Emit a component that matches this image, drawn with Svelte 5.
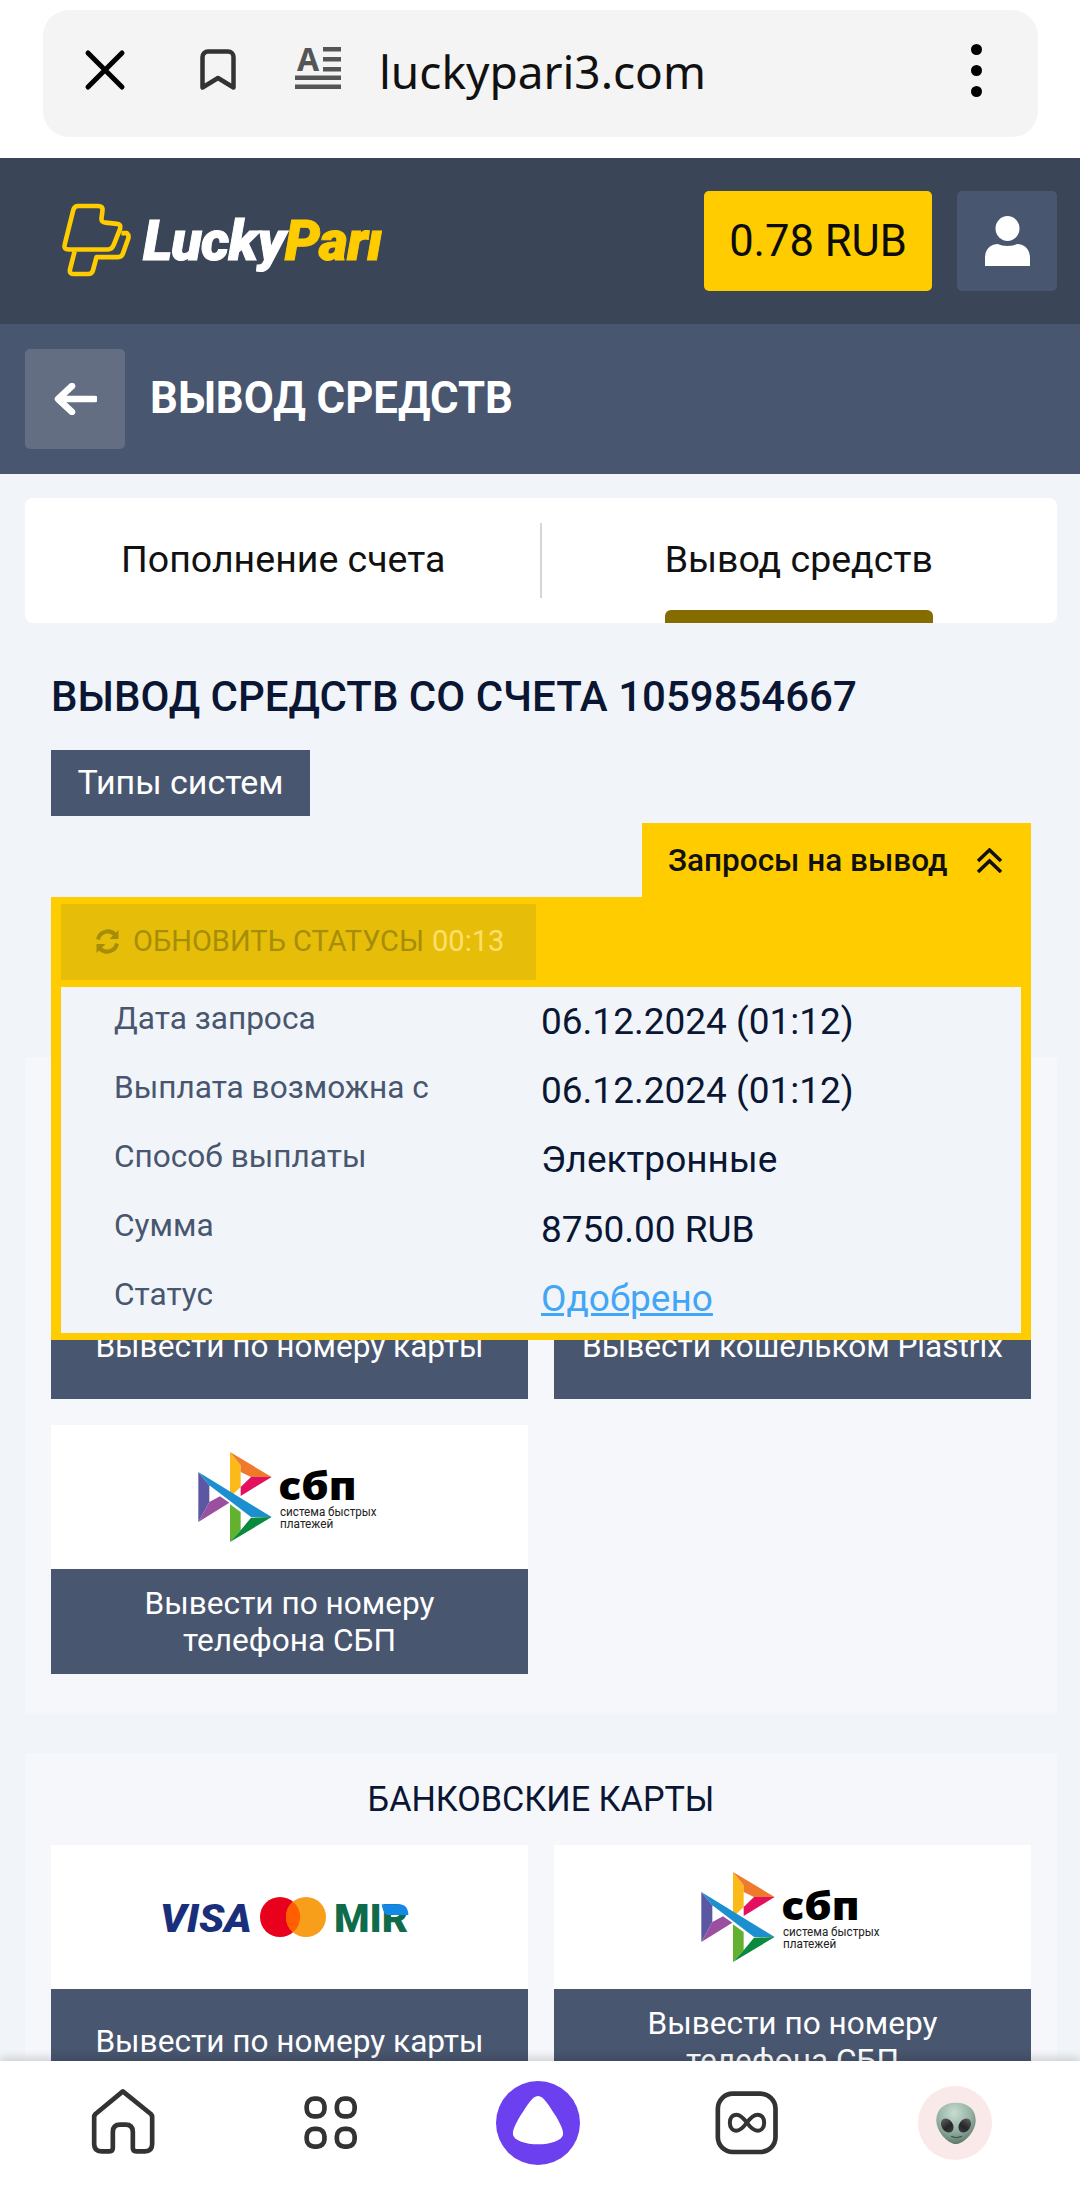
<script>
  const rows = [
    ['Дата запроса', '06.12.2024 (01:12)'],
    ['Выплата возможна с', '06.12.2024 (01:12)'],
    ['Способ выплаты', 'Электронные'],
    ['Сумма', '8750.00 RUB']
  ];
</script>

{#snippet sbp()}
  <svg class="sbp" viewBox="0 20 720 360" aria-label="СБП">
    <polygon fill="#fbb91a" points="180,65 212,105 212,170 180,200" />
    <polygon fill="#ef7a2b" points="180,65 305,140 243,140 212,125 212,105" />
    <polygon fill="#e2105f" points="305,140 212,197 212,170 243,140" />
    <polygon fill="#5b57a2" points="85,125 118,165 118,215 85,275" />
    <polygon fill="#9a4f9f" points="85,275 118,215 150,198 178,217" />
    <polygon fill="#1c8fd0" points="85,125 305,260 243,260 118,165" />
    <polygon fill="#62b22f" points="180,222 212,245 212,300 180,335" />
    <polygon fill="#0a8a3c" points="180,335 212,300 243,262 305,260" />
    <text x="325" y="208" class="sbp-big" textLength="235" lengthAdjust="spacingAndGlyphs">сбп</text>
    <text x="330" y="258" class="sbp-small" textLength="290" lengthAdjust="spacingAndGlyphs">система быстрых</text>
    <text x="330" y="292" class="sbp-small" textLength="160" lengthAdjust="spacingAndGlyphs">платежей</text>
  </svg>
{/snippet}

{#snippet cards()}
  <svg class="cards-logo" viewBox="0 18 900 240" aria-label="Visa Mastercard Mir">
    <text x="60" y="184" class="visa" textLength="275" lengthAdjust="spacingAndGlyphs">VISA</text>
    <circle cx="420" cy="138" r="60" fill="#e8001c" />
    <circle cx="498" cy="138" r="60" fill="#f79e1b" />
    <path d="M459 92a60 60 0 0 1 0 92a60 60 0 0 1 0-92z" fill="#ff5f00" />
    <text x="582" y="184" class="mir" textLength="223" lengthAdjust="spacingAndGlyphs">MIR</text>
    <path d="M725 100h52c18 0 28 12 28 32h-62c-8 0-15-12-18-32z" fill="#1488e6" />
  </svg>
{/snippet}

<div class="page">
  <div class="browser">
    <div class="urlbar">
      <svg class="ic-x" viewBox="0 0 38 38"><path d="M2 2 36 36M36 2 2 36" /></svg>
      <svg class="ic-mark" viewBox="0 0 36 42"><path d="M2.5 38.5V8a5.5 5.5 0 0 1 5.5-5.5h20A5.5 5.5 0 0 1 33.500 8v30.500L18 29z" /></svg>
      <svg class="ic-read" viewBox="0 0 46 42">
        <text x="2" y="24" class="ic-a">A</text>
        <rect x="28" y="0" width="18" height="4.500" /><rect x="28" y="10" width="18" height="4.500" /><rect x="28" y="20" width="18" height="4.500" />
        <rect x="0" y="28.500" width="46" height="4.500" /><rect x="0" y="37.500" width="46" height="4.500" />
      </svg>
      <span class="url">luckypari3.com</span>
      <span class="dots"><i></i><i></i><i></i></span>
    </div>
  </div>

  <header class="top">
    <div class="logo">
      <svg class="logo-mark" viewBox="60 60 220 235">
        <path d="M245 160 262 160 Q268 165 266 175 L250 220 Q247 232 235 232 L170 232 L160 270 Q157 283 145 283 L100 283 Q88 283 90 270 L104 215" />
        <path d="M115 78 L175 78 Q190 78 188 92 L185 115 Q184 128 197 128 L232 132 Q245 133 241 147 L222 195 Q217 209 204 209 L86 209 Q70 209 74 195 L100 90 Q103 78 115 78Z" />
      </svg>
      <span class="logo-text">Lucky<b>Parı</b></span>
    </div>
    <div class="balance">0.78 RUB</div>
    <div class="user">
      <svg viewBox="0 0 45 50"><ellipse cx="22.500" cy="12.500" rx="12" ry="12.500" /><path d="M0 50V42C0 33 6 28 13 28 17 30.500 28 30.500 32 28 39 28 45 33 45 42V50Z" /></svg>
    </div>
  </header>

  <div class="sub">
    <div class="back">
      <svg viewBox="0 0 44 32"><path d="M42 16H6M19 3 5 16 19 29" /></svg>
    </div>
    <span class="sub-title">ВЫВОД СРЕДСТВ</span>
  </div>

  <main>
    <nav class="tabs">
      <div class="tab">Пополнение счета</div>
      <div class="tab active"><span>Вывод средств</span></div>
    </nav>

    <h1>ВЫВОД СРЕДСТВ СО СЧЕТА 1059854667</h1>

    <div class="types">Типы систем</div>

    <div class="anchor">
      <div class="requests">
        <div class="req-tab">
          <span>Запросы на вывод</span>
          <svg viewBox="0 0 27 25"><path d="M2 13 13.500 2 25 13M2 24 13.500 13 25 24" /></svg>
        </div>
        <div class="req-panel">
          <div class="refresh">
            <svg viewBox="0 0 25 25"><path d="M3 10.500A10 10 0 0 1 20 5.500M22 14.500A10 10 0 0 1 5 19.500" /><path class="fill" d="M23.500 1v9h-9zM1.500 24v-9h9z" /></svg>
            <span>ОБНОВИТЬ СТАТУСЫ</span><em>00:13</em>
          </div>
          <div class="req-body">
            {#each rows as r}
              <div class="row"><span class="k">{r[0]}</span><span class="v">{r[1]}</span></div>
            {/each}
            <div class="row"><span class="k">Статус</span><span class="v link">Одобрено</span></div>
          </div>
        </div>
      </div>
    </div>

    <section class="first">
      <h2>ЭЛЕКТРОННЫЕ КОШЕЛЬКИ</h2>
      <div class="grid">
        <div class="card"><div class="pic">{@render cards()}</div><div class="btn">Вывести по номеру карты</div></div>
        <div class="card"><div class="pic"></div><div class="btn">Вывести кошельком Plastrix</div></div>
        <div class="card"><div class="pic">{@render sbp()}</div><div class="btn">Вывести по номеру<br />телефона СБП</div></div>
      </div>
    </section>

    <section>
      <h2>БАНКОВСКИЕ КАРТЫ</h2>
      <div class="grid">
        <div class="card"><div class="pic">{@render cards()}</div><div class="btn">Вывести по номеру карты</div></div>
        <div class="card"><div class="pic">{@render sbp()}</div><div class="btn">Вывести по номеру<br />телефона СБП</div></div>
      </div>
    </section>
  </main>

  <footer class="dock">
    <svg class="d-home" viewBox="90 40 200 204"><path d="M188 50 272 118Q276 122 276 128V208Q276 230 254 230H228Q218 230 218 220V172Q218 150 196 150H180Q158 150 158 172V220Q158 230 148 230H124Q102 230 102 208V128Q102 122 106 118Z" /></svg>
    <svg class="d-grid" viewBox="730 60 170 170">
      <rect x="741" y="71" width="53" height="53" rx="22" /><rect x="831" y="71" width="53" height="53" rx="22" />
      <rect x="741" y="161" width="53" height="53" rx="22" /><rect x="831" y="161" width="53" height="53" rx="22" />
    </svg>
    <svg class="d-alice" viewBox="47 17 252 252">
      <circle cx="173" cy="143" r="126" fill="#6c3fef" />
      <path d="M173 62C190 62 205 90 225 120 240 145 250 165 248 178 245 195 210 207 173 207 136 207 101 195 98 178 96 165 106 145 121 120 141 90 156 62 173 62Z" fill="#fff" />
    </svg>
    <svg class="d-inf" viewBox="700 42 200 204">
      <rect x="714" y="56" width="173" height="175" rx="45" />
      <path class="inf" d="M801 143C790 128 780 119 770 119 757 119 750 130 750 143 750 156 757 167 770 167 780 167 790 158 801 143 812 128 822 119 833 119 846 119 853 130 853 143 853 156 846 167 833 167 822 167 812 158 801 143Z" />
    </svg>
    <div class="avatar">
      <svg viewBox="100 75 130 140">
        <defs>
          <radialGradient id="al" cx="0.45" cy="0.25" r="0.8"><stop offset="0" stop-color="#c9dcd2" /><stop offset="0.55" stop-color="#93b1a3" /><stop offset="1" stop-color="#54705f" /></radialGradient>
          <linearGradient id="eye" x1="0" y1="0" x2="0" y2="1"><stop offset="0" stop-color="#5a5a5c" /><stop offset="0.6" stop-color="#262628" /><stop offset="1" stop-color="#3b3b3d" /></linearGradient>
        </defs>
        <path d="M166 82C205 82 226 105 226 135 226 170 190 207 166 207 142 207 107 170 107 135 107 105 127 82 166 82Z" fill="url(#al)" />
        <ellipse cx="140" cy="151" rx="17" ry="23" transform="rotate(-35 140 151)" fill="url(#eye)" />
        <ellipse cx="193" cy="151" rx="17" ry="23" transform="rotate(35 193 151)" fill="url(#eye)" />
        <path d="M152 184Q167 192 184 184" fill="none" stroke="#33463c" stroke-width="3" />
      </svg>
    </div>
  </footer>
</div>

<style>
  :global(body) { margin: 0; }
  .page {
    position: relative;
    width: 1080px;
    height: 2186px;
    overflow: hidden;
    background: #f1f5f9;
    font-family: Roboto, "Liberation Sans", sans-serif;
    color: #0a1633;
  }
  .browser { height: 158px; background: #fff; padding: 10px 42px 0 43px; box-sizing: border-box; }
  .urlbar {
    height: 127px;
    border-radius: 26px;
    background: #f4f4f4;
    display: flex;
    align-items: center;
    position: relative;
    padding-left: 43px;
    box-sizing: border-box;
  }
  .ic-x { width: 38px; height: 38px; fill: none; stroke: #000; stroke-width: 5; stroke-linecap: round; overflow: visible; margin-top: -8px; }
  .ic-mark { width: 36px; height: 42px; margin-left: 76px; margin-top: -8px; fill: none; stroke: #333; stroke-width: 4.500; stroke-linejoin: round; }
  .ic-read { width: 46px; height: 42px; margin-left: 59px; margin-top: -12px; fill: #555; }
  .ic-a { font: 700 32px "Noto Sans", sans-serif; fill: #555; }
  .url { margin-left: 38px; font: 46px/1.2 "Noto Sans", sans-serif; color: #111; margin-top: -4px; }
  .dots { margin-left: auto; margin-right: 56px; display: flex; flex-direction: column; gap: 10px; margin-top: -7px; }
  .dots i { width: 11px; height: 11px; border-radius: 50%; background: #000; display: block; }

  .top {
    height: 166px;
    background: #3a4558;
    display: flex;
    align-items: center;
    padding: 0 23px 0 25px;
    box-sizing: border-box;
  }
  .logo { display: flex; align-items: center; margin-right: auto; }
  .logo-mark { width: 73px; height: 78px; margin-left: 35px; margin-top: -4px; fill: none; stroke: #ffcc00; stroke-width: 14; stroke-linejoin: round; }
  .logo-text { margin-left: 10px; font: italic 900 56px/1 Roboto, sans-serif; letter-spacing: -0.8px; color: #fff; -webkit-text-stroke: 1px currentColor; }
  .logo-text b { color: #ffcc00; font-weight: 900; }
  .balance {
    width: 228px;
    height: 100px;
    background: #ffcc00;
    border-radius: 5px;
    color: #0c0c0c;
    font-size: 43.500px;
    display: flex;
    align-items: center;
    justify-content: center;
  }
  .user {
    width: 100px;
    height: 100px;
    margin-left: 25px;
    border-radius: 5px;
    background: #48566f;
    display: flex;
    align-items: center;
    justify-content: center;
  }
  .user svg { width: 45px; height: 50px; fill: #fff; }

  .sub {
    height: 150px;
    background: #48566f;
    display: flex;
    align-items: center;
    padding-left: 25px;
    box-sizing: border-box;
  }
  .back {
    width: 100px;
    height: 100px;
    border-radius: 5px;
    background: #636e83;
    display: flex;
    align-items: center;
    justify-content: center;
  }
  .back svg { width: 44px; height: 32px; fill: none; stroke: #fff; stroke-width: 6.500; stroke-linecap: round; stroke-linejoin: round; }
  .sub-title { margin-left: 25px; margin-top: -2px; font-size: 43.700px; font-weight: 700; color: #fff; }

  main { padding-top: 24px; }
  .tabs {
    margin: 0 23px 0 25px;
    height: 125px;
    background: #fff;
    border-radius: 8px;
    display: flex;
    position: relative;
    overflow: hidden;
  }
  .tab { width: 517px; display: flex; justify-content: center; align-items: center; height: 125px; padding-bottom: 3px; font-size: 37.500px; color: #111; box-sizing: border-box; position: relative; }
  .tab:first-child::after { content: ""; position: absolute; right: 0; top: 25px; height: 75px; width: 2px; background: #d6d6d6; }
  .tab.active { margin-left: -1px; padding-bottom: 0; }
  .tab.active span { position: relative; height: 125px; padding-bottom: 3px; box-sizing: border-box; display: flex; align-items: center; }
  .tab.active span::after { content: ""; position: absolute; left: 0; right: 0; bottom: 0; height: 13px; background: #846c00; border-radius: 6px 6px 0 0; }

  h1 { margin: 48px 0 0 51px; font-size: 42px; line-height: 52px; font-weight: 500; color: #0a1633; }
  .types {
    width: 259px;
    height: 66px;
    margin: 27px 0 0 51px;
    padding-bottom: 2px;
    box-sizing: border-box;
    background: #48566f;
    color: #fff;
    font-size: 34px;
    display: flex;
    align-items: center;
    justify-content: center;
  }
  .anchor { position: relative; height: 0; }
  .requests { position: absolute; top: 7px; left: 51px; width: 980px; z-index: 2; }
  .req-tab {
    margin-left: auto;
    width: 389px;
    height: 74px;
    background: #ffcc00;
    display: flex;
    align-items: center;
    padding: 0 28px 0 26px;
    box-sizing: border-box;
    justify-content: space-between;
    font-size: 31.500px;
    font-weight: 500;
    color: #111;
  }
  .req-tab svg { width: 27px; height: 25px; fill: none; stroke: #111; stroke-width: 3.500; }
  .req-panel { background: #ffcc00; padding: 7px 10px; }
  .refresh {
    width: 475px;
    height: 76px;
    background: #e6bd08;
    display: flex;
    align-items: center;
    padding: 0 0 2px 34px;
    box-sizing: border-box;
    color: #a68d08;
    font-size: 29px;
  }
  .refresh svg { width: 25px; height: 25px; margin-right: 13px; fill: none; stroke: #a68d08; stroke-width: 4; }
  .refresh .fill { fill: #a68d08; stroke: none; }
  .refresh em { font-style: normal; color: #ffe06b; margin-left: 8px; }
  .req-body { margin-top: 7px; background: #f1f5f9; height: 346px; box-sizing: border-box; }
  .row { display: flex; height: 69.200px; align-items: center; }
  .k { width: 480px; padding-left: 53px; box-sizing: border-box; font-size: 31.600px; color: #48566f; margin-top: -7px; flex: none; }
  .v { font-size: 37px; color: #0a1633; }
  .link { color: #42a5f5; text-decoration: underline; }

  section { margin: 39px 23px 0 25px; padding: 0 26px 40px; background: #f5f7fb; }
  section.first { margin-top: 241px; }
  h2 { margin: 0; height: 92px; display: flex; align-items: center; justify-content: center; font-size: 34.200px; font-weight: 400; color: #0a1633; }
  .first h2 { height: 93px; }
  .grid { display: grid; grid-template-columns: 477px 477px; gap: 26px; }
  .pic { height: 144px; background: #fff; display: flex; align-items: center; justify-content: center; }
  .btn {
    height: 105px;
    background: #48566f;
    color: #fff;
    font-size: 31.600px;
    line-height: 37px;
    text-align: center;
    display: flex;
    align-items: center;
    justify-content: center;
  }
  .sbp { width: 240px; height: 120px; }
  .sbp-big { font: 900 118px "Open Sans", sans-serif; fill: #000; }
  .sbp-small { font: 400 37px Roboto, sans-serif; fill: #222; }
  .cards-logo { width: 300px; height: 80px; }
  .visa { font: italic 900 118px Roboto, sans-serif; fill: #1a2f7c; }
  .mir { font: 900 116px Roboto, sans-serif; fill: #0f6b4a; }

  .dock {
    position: absolute;
    left: 0;
    right: 0;
    bottom: 0;
    height: 125px;
    background: #fff;
    box-shadow: 0 -4px 8px rgba(0, 0, 0, 0.14);
    z-index: 3;
  }
  .dock svg { fill: none; stroke: #333; stroke-width: 14; stroke-linejoin: round; }
  .d-home, .d-grid, .d-alice, .d-inf, .avatar { position: absolute; }
  .d-home { left: 90px; top: 27px; width: 67px; height: 68px; }
  .d-grid { left: 303px; top: 34px; width: 57px; height: 57px; }
  .d-alice { left: 496px; top: 20px; width: 84px; height: 84px; stroke: none !important; }
  .d-inf { left: 713px; top: 28px; width: 67px; height: 68px; }
  .inf { stroke-width: 12; }
  .avatar { left: 918px; top: 25px; width: 74px; height: 74px; border-radius: 50%; background: #f9e9e9; display: flex; align-items: center; justify-content: center; }
  .avatar svg { width: 43px; height: 47px; stroke: none; }
</style>
